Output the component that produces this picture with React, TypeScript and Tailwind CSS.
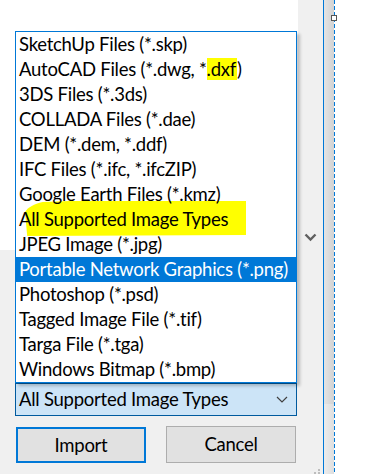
import React from "react";

const items: React.ReactNode[] = [
  "SketchUp Files (*.skp)",
  <>
    AutoCAD Files (*.dwg, *<span className="bg-[#ffff00] pr-px">.dxf</span>)
  </>,
  "3DS Files (*.3ds)",
  "COLLADA Files (*.dae)",
  "DEM (*.dem, *.ddf)",
  "IFC Files (*.ifc, *.ifcZIP)",
  "Google Earth Files (*.kmz)",
  <span className="relative inline-block">
    <svg
      className="absolute -z-10 left-[6px] top-[-7px] w-[calc(100%+12px)] h-[36px]"
      viewBox="0 0 100 36"
      preserveAspectRatio="none"
    >
      <path d="M0 12 C1.5 7 4 4 8 2 L20 1 L100 1 L100 35 L1 36 Z" fill="#ffff00" />
    </svg>
    All Supported Image Types
  </span>,
  "JPEG Image (*.jpg)",
  "Portable Network Graphics (*.png)",
  "Photoshop (*.psd)",
  "Tagged Image File (*.tif)",
  "Targa File (*.tga)",
  "Windows Bitmap (*.bmp)",
];

const txt = "text-[18.5px] leading-[25px] tracking-[-0.25px] whitespace-nowrap";

export default function App() {
  return (
    <div
      className="flex w-[378px] h-[474px] overflow-hidden bg-white text-black"
      style={{ fontFamily: 'Lato, "Noto Sans", sans-serif' }}
    >
      {/* left dialog area */}
      <div className="relative w-[323px] h-full bg-[#f0f0f0]">
        <div className="w-[298px] h-[250px] bg-white" />

        {/* scroll chevron in side strip */}
        <svg className="absolute left-[304px] top-[233px]" width="13" height="9" viewBox="0 0 13 9">
          <path d="M1.5 1.5 L6.5 6.5 L11.5 1.5" fill="none" stroke="#606060" strokeWidth="2.4" />
        </svg>

        {/* combo box */}
        <div className="ml-[15px] mt-[133px] w-[282px] h-[33px] border border-[#005a9e] bg-[#cce4f7] flex items-center justify-between pl-[3px] pr-[8px]">
          <span className={txt}>All Supported Image Types</span>
          <svg width="12" height="7" viewBox="0 0 12 7">
            <path d="M1 1 L6 6 L11 1" fill="none" stroke="#404040" strokeWidth="1.2" />
          </svg>
        </div>

        {/* buttons */}
        <div className="flex mt-[10px] pl-[16px] gap-[20px]">
          <button className={"w-[130px] h-[36px] mt-px border-2 border-[#0078d7] bg-[#e1e1e1] flex items-center justify-center " + txt}>
            Import
          </button>
          <button className={"w-[130px] h-[37px] border border-[#adadad] bg-[#e1e1e1] flex items-center justify-center " + txt}>
            Cancel
          </button>
        </div>

        {/* size grip */}
        <div className="absolute left-[318px] top-[469px] w-[2px] h-[2px] bg-[#bdbdbd]" />
        <div className="absolute left-[314px] top-[472px] w-[2px] h-[2px] bg-[#bdbdbd]" />
        <div className="absolute left-[318px] top-[472px] w-[2px] h-[2px] bg-[#bdbdbd]" />

        {/* dropdown popup */}
        <div className="absolute z-10 left-[15px] top-[31px] w-[282px] border border-[#0078d7] bg-white shadow-[3px_3px_3px_rgba(0,0,0,0.22)]">
          {items.map((t, i) => (
            <div
              key={i}
              className={
                i === 9
                  ? "h-[25px] pl-[3px] bg-[#0078d7] text-white " + txt
                  : "h-[25px] pl-[3px] " + txt
              }
            >
              {t}
            </div>
          ))}
        </div>
      </div>

      {/* right side */}
      <div className="w-px h-full bg-[#0078d7]" />
      <div className="w-[10px] h-full flex flex-col">
        <div className="h-[404px] bg-[linear-gradient(to_right,#e4e4e4,#d2d2d2)]" />
        <div className="flex-1 bg-[linear-gradient(to_right,#ececec,#dedede)]" />
      </div>
      <div className="relative w-px h-full bg-[repeating-linear-gradient(to_bottom,#0078d7_0px,#0078d7_4px,transparent_4px,transparent_6px)]">
        <div className="absolute left-[-3px] top-[15px] w-[6px] h-[6px] border border-[#555555] bg-white" />
      </div>
      <div className="flex-1 h-full bg-white" />
    </div>
  );
}
